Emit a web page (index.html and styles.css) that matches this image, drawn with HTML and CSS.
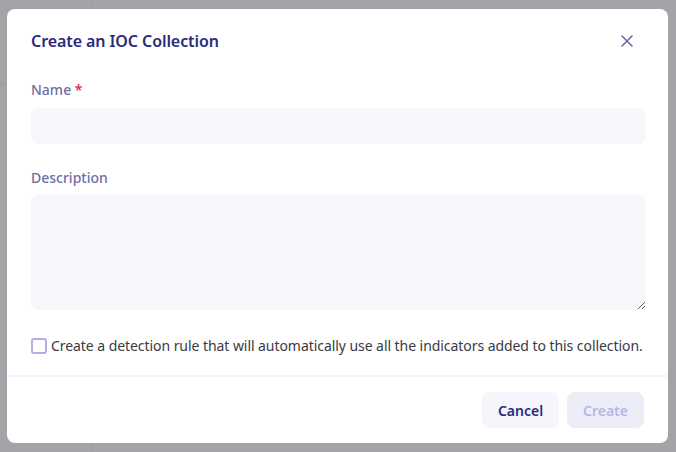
FILE: index.html
```html
<!DOCTYPE html>
<html>
<head>
<meta charset="utf-8">
<link rel="stylesheet" href="styles.css">
</head>
<body>
<div class="page">
  <div class="sidebar"><div class="sidebar-top"></div></div>
  <div class="main"></div>
</div>
<div class="overlay">
  <div class="modal">
    <div class="modal-header">
      <h2 class="modal-title">Create an IOC Collection</h2>
      <button class="close" aria-label="Close">
        <svg width="12" height="12" viewBox="0 0 12 12"><path d="M1 1L11 11M11 1L1 11" stroke="#6b6ba8" stroke-width="1.6" stroke-linecap="round"/></svg>
      </button>
    </div>
    <div class="modal-body">
      <label class="label">Name <span class="req">*</span></label>
      <input class="input" type="text">
      <label class="label label-desc">Description</label>
      <textarea class="textarea"></textarea>
      <label class="check">
        <span class="box"></span>
        <span class="check-text">Create a detection rule that will automatically use all the indicators added to this collection.</span>
      </label>
    </div>
    <div class="modal-footer">
      <button class="btn btn-cancel">Cancel</button>
      <button class="btn btn-create">Create</button>
    </div>
  </div>
</div>
</body>
</html>
```
FILE: styles.css
```css
* { box-sizing: border-box; }
html, body { margin: 0; padding: 0; }
body {
  width: 676px;
  height: 452px;
  overflow: hidden;
  font-family: "Noto Sans", "Open Sans", sans-serif;
  background: #a3a3a8;
  position: relative;
}
.page {
  display: flex;
  height: 452px;
}
.sidebar {
  width: 93px;
  border-right: 1px solid #9b9ba2;
}
.sidebar-top {
  height: 84px;
  border-bottom: 1px solid #9b9ba2;
}
.main { flex: 1; }
.overlay {
  position: absolute;
  inset: 0;
  padding: 9px 8px 9px 7px;
}
.modal {
  background: #fff;
  border-radius: 8px;
  height: 434px;
  width: 661px;
  display: flex;
  flex-direction: column;
}
.modal-header {
  display: flex;
  align-items: center;
  justify-content: space-between;
  padding: 20px 24px 0 24px;
  height: 44px;
}
.modal-title {
  margin: 0;
  font-size: 16px;
  line-height: 24px;
  font-weight: 600;
  letter-spacing: -0.08px;
  color: #2b2b7c;
}
.close {
  border: 0;
  background: none;
  padding: 0;
  width: 12px;
  height: 12px;
  margin-right: 11px;
  display: flex;
}
.modal-body {
  padding: 27px 24px 0 24px;
  display: flex;
  flex-direction: column;
}
.label {
  font-size: 14px;
  line-height: 20px;
  font-weight: 500;
  color: #6f6da6;
}
.req { color: #e0245e; font-weight: 600; }
.input {
  margin-top: 8px;
  height: 36px;
  border: 0;
  border-radius: 8px;
  background: #f6f6fb;
  width: 615px;
}
.label-desc { margin-top: 24px; }
.textarea {
  margin-top: 7px;
  height: 115px;
  border: 0;
  border-radius: 8px;
  background: #f6f6fb;
  width: 615px;
  resize: vertical;
}
.check {
  margin-top: 26px;
  display: flex;
  align-items: center;
  gap: 4px;
  font-size: 14px;
  line-height: 20px;
  color: #3a3a44;
}
.box {
  width: 16px;
  height: 16px;
  border: 2px solid #b1afe6;
  border-radius: 3px;
  flex: none;
}
.check-text { white-space: nowrap; letter-spacing: -0.06px; }
.modal-footer {
  margin-top: auto;
  border-top: 2px solid #f4f4fa;
  padding: 15px 24px 15px 24px;
  display: flex;
  justify-content: flex-end;
  gap: 8px;
}
.btn {
  height: 36px;
  width: 77px;
  border: 0;
  border-radius: 8px;
  font-family: "Noto Sans", "Open Sans", sans-serif;
  font-size: 14px;
  font-weight: 600;
}
.btn-cancel { background: #f5f5fb; color: #2b2b7c; }
.btn-create { background: #ededf8; color: #b7b5e6; }
```
